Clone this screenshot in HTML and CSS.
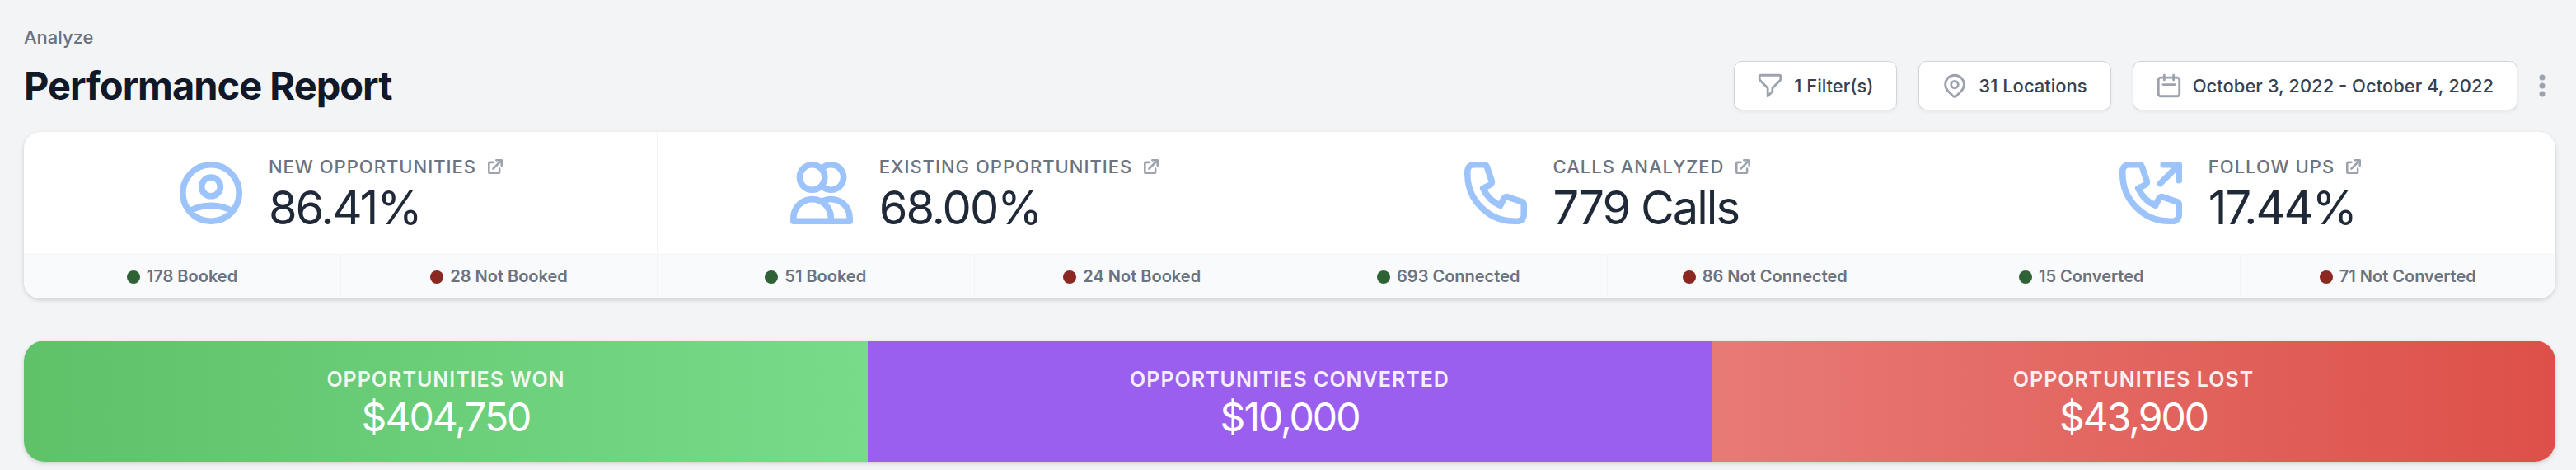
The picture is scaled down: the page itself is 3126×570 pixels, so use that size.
FILE: index.html
```html
<!DOCTYPE html>
<html lang="en">
<head>
  <meta charset="UTF-8" />
  <meta name="viewport" content="width=device-width, initial-scale=1" />
  <title>Performance Report</title>
  <link rel="stylesheet" href="styles.css">
</head>
<body>

<!-- shared icons -->
<svg class="icon-defs" aria-hidden="true">
  <symbol id="icon-external" viewBox="3 3 14 14">
    <path d="M11 3a1 1 0 100 2h2.586l-6.293 6.293a1 1 0 101.414 1.414L15 6.414V9a1 1 0 102 0V4a1 1 0 00-1-1h-5z" />
    <path d="M5 5a2 2 0 00-2 2v8a2 2 0 002 2h8a2 2 0 002-2v-3a1 1 0 10-2 0v3H5V7h3a1 1 0 000-2H5z" />
  </symbol>
</svg>

<div class="page">
  <header>
    <p class="breadcrumb">Analyze</p>
    <div class="title-row">
      <h1>Performance Report</h1>
      <div class="toolbar">
        <button type="button" class="filter-btn">
          <svg viewBox="0 0 24 24"><path d="M3 4a1 1 0 011-1h16a1 1 0 011 1v2.586a1 1 0 01-.293.707l-6.414 6.414a1 1 0 00-.293.707V17l-4 4v-6.586a1 1 0 00-.293-.707L3.293 7.293A1 1 0 013 6.586V4z" /></svg>
          1 Filter(s)
        </button>
        <button type="button" class="filter-btn">
          <svg viewBox="0 0 24 24"><path d="M17.657 16.657L13.414 20.9a1.998 1.998 0 01-2.827 0l-4.244-4.243a8 8 0 1111.314 0z" /><path d="M15 11a3 3 0 11-6 0 3 3 0 016 0z" /></svg>
          31 Locations
        </button>
        <button type="button" class="filter-btn">
          <svg viewBox="0 0 24 24"><path d="M8 7V3m8 4V3m-9 8h10M5 21h14a2 2 0 002-2V7a2 2 0 00-2-2H5a2 2 0 00-2 2v12a2 2 0 002 2z" /></svg>
          October 3, 2022 - October 4, 2022
        </button>
        <button type="button" class="more-btn" aria-label="More options">
          <svg viewBox="0 0 8 28"><circle cx="4" cy="4" r="3.5" /><circle cx="4" cy="14" r="3.5" /><circle cx="4" cy="24" r="3.5" /></svg>
        </button>
      </div>
    </div>
  </header>

  <section class="stats">
    <article class="stat">
      <div class="stat-main">
        <svg class="stat-icon" viewBox="2 2 20 20"><path d="M5.121 17.804A13.937 13.937 0 0112 16c2.5 0 4.847.655 6.879 1.804M15 10a3 3 0 11-6 0 3 3 0 016 0zm6 2a9 9 0 11-18 0 9 9 0 0118 0z" /></svg>
        <div class="stat-text">
          <h2>New Opportunities <a href="#" aria-label="Open new opportunities"><svg><use href="#icon-external" /></svg></a></h2>
          <p class="stat-value">86.41%</p>
        </div>
      </div>
      <div class="stat-footer">
        <span class="good">178 Booked</span>
        <span class="bad">28 Not Booked</span>
      </div>
    </article>

    <article class="stat">
      <div class="stat-main">
        <svg class="stat-icon" viewBox="2 2 20 20"><path d="M12 4.354a4 4 0 110 5.292M15 21H3v-1a6 6 0 0112 0v1zm0 0h6v-1a6 6 0 00-9-5.197M13 7a4 4 0 11-8 0 4 4 0 018 0z" /></svg>
        <div class="stat-text">
          <h2>Existing Opportunities <a href="#" aria-label="Open existing opportunities"><svg><use href="#icon-external" /></svg></a></h2>
          <p class="stat-value">68.00%</p>
        </div>
      </div>
      <div class="stat-footer">
        <span class="good">51 Booked</span>
        <span class="bad">24 Not Booked</span>
      </div>
    </article>

    <article class="stat">
      <div class="stat-main">
        <svg class="stat-icon" viewBox="2 2 20 20"><path d="M3 5a2 2 0 012-2h3.28a1 1 0 01.948.684l1.498 4.493a1 1 0 01-.502 1.21l-2.257 1.13a11.042 11.042 0 005.516 5.516l1.13-2.257a1 1 0 011.21-.502l4.493 1.498a1 1 0 01.684.949V19a2 2 0 01-2 2h-1C9.716 21 3 14.284 3 6V5z" /></svg>
        <div class="stat-text">
          <h2>Calls Analyzed <a href="#" aria-label="Open calls analyzed"><svg><use href="#icon-external" /></svg></a></h2>
          <p class="stat-value">779 Calls</p>
        </div>
      </div>
      <div class="stat-footer">
        <span class="good">693 Connected</span>
        <span class="bad">86 Not Connected</span>
      </div>
    </article>

    <article class="stat">
      <div class="stat-main">
        <svg class="stat-icon" viewBox="2 2 20 20"><path d="M16 3h5m0 0v5m0-5l-6 6M5 3a2 2 0 00-2 2v1c0 8.284 6.716 15 15 15h1a2 2 0 002-2v-3.28a1 1 0 00-.684-.948l-4.493-1.498a1 1 0 00-1.21.502l-1.13 2.257a11.042 11.042 0 01-5.516-5.517l2.257-1.128a1 1 0 00.502-1.21L9.228 3.683A1 1 0 008.279 3H5z" /></svg>
        <div class="stat-text">
          <h2>Follow Ups <a href="#" aria-label="Open follow ups"><svg><use href="#icon-external" /></svg></a></h2>
          <p class="stat-value">17.44%</p>
        </div>
      </div>
      <div class="stat-footer">
        <span class="good">15 Converted</span>
        <span class="bad">71 Not Converted</span>
      </div>
    </article>
  </section>

  <section class="totals">
    <div class="total won">
      <h2>Opportunities Won</h2>
      <p>$404,750</p>
    </div>
    <div class="total converted">
      <h2>Opportunities Converted</h2>
      <p>$10,000</p>
    </div>
    <div class="total lost">
      <h2>Opportunities Lost</h2>
      <p>$43,900</p>
    </div>
  </section>
</div>

</body>
</html>
```

FILE: styles.css
```css
* {
  box-sizing: border-box;
}

body {
  margin: 0;
  font-family: Inter, sans-serif;
  background: #f3f4f6;
  color: #1f2937;
}

h1, h2, p {
  margin: 0;
}

svg {
  fill: none;
  stroke: currentColor;
  stroke-width: 2;
  stroke-linecap: round;
  stroke-linejoin: round;
}

.icon-defs {
  display: none;
}

.page {
  padding: 28px 25px 10px 29px;
}

/* header */
.breadcrumb {
  font-size: 22px;
  line-height: 34px;
  font-weight: 500;
  color: #6b7280;
}

.title-row {
  display: flex;
  justify-content: space-between;
  align-items: center;
  margin: 12px 0 26px;
}

h1 {
  font-size: 47px;
  line-height: 60px;
  font-weight: 700;
  letter-spacing: -1px;
  color: #111827;
}

.toolbar {
  display: flex;
  align-items: center;
  gap: 26px;
}

.filter-btn {
  display: flex;
  align-items: center;
  gap: 12px;
  padding: 12px 28px 12px 26px;
  font: 500 22px/34px Inter, sans-serif;
  color: #374151;
  background: #fff;
  border: 1px solid #d1d5db;
  border-radius: 10px;
  box-shadow: 0 2px 4px rgb(0 0 0 / 0.05);
  cursor: pointer;
}

.filter-btn svg {
  width: 34px;
  height: 34px;
  color: #9ca3af;
}

.more-btn {
  display: flex;
  padding: 0 12px 0 0;
  border: 0;
  background: none;
  color: #9ca3af;
  cursor: pointer;
}

.more-btn svg {
  width: 8px;
  height: 28px;
  fill: currentColor;
  stroke: none;
}

/* stat cards */
.stats {
  display: grid;
  grid-template-columns: repeat(4, 1fr);
  overflow: hidden;
  background: #fff;
  border-radius: 20px;
  box-shadow: 0 2px 6px rgb(0 0 0 / 0.1), 0 2px 4px rgb(0 0 0 / 0.06);
}

.stat + .stat {
  border-left: 1px solid #f3f4f6;
}

.stat-main {
  display: flex;
  justify-content: center;
  align-items: center;
  gap: 32px;
  height: 148px;
  padding-left: 2px;
}

.stat-icon {
  width: 76px;
  height: 76px;
  color: #9dc4fa;
}

.stat-text {
  padding-top: 6px;
}

.stat h2 {
  display: flex;
  align-items: center;
  gap: 14px;
  font-size: 22px;
  line-height: 30px;
  font-weight: 500;
  letter-spacing: 1px;
  text-transform: uppercase;
  color: #6b7280;
}

.stat h2 a {
  display: flex;
  color: #9ca3af;
}

.stat h2 svg {
  width: 18px;
  height: 18px;
  fill: currentColor;
  stroke: none;
}

.stat-value {
  font-size: 56px;
  line-height: 70px;
  letter-spacing: -2px;
}

.stat-footer {
  display: grid;
  grid-template-columns: 1fr 1fr;
  background: #f9fafb;
  border-top: 1px solid #f3f4f6;
}

.stat-footer span {
  display: flex;
  justify-content: center;
  align-items: center;
  gap: 8px;
  font-size: 20px;
  line-height: 53px;
  font-weight: 600;
  color: #6b7280;
}

.stat-footer span + span {
  border-left: 1px solid #f3f4f6;
}

.stat-footer span::before {
  content: "";
  width: 16px;
  height: 16px;
  border-radius: 50%;
}

.good::before {
  background: #2f6336;
}

.bad::before {
  background: #8b2822;
}

/* totals banner */
.totals {
  display: grid;
  grid-template-columns: repeat(3, 1fr);
  margin-top: 51px;
  overflow: hidden;
  border-radius: 25px;
  box-shadow: 0 2px 6px rgb(0 0 0 / 0.1), 0 2px 4px rgb(0 0 0 / 0.06);
}

.total {
  padding: 31px 0 24px;
  text-align: center;
  color: #fff;
}

.total h2 {
  font-size: 25px;
  line-height: 32px;
  font-weight: 600;
  letter-spacing: 1px;
  text-transform: uppercase;
  opacity: 0.9;
}

.total p {
  font-size: 48px;
  line-height: 60px;
  letter-spacing: -2px;
}

.won {
  background: linear-gradient(to right, #5fc168, #78db8a);
}

.converted {
  background: #9b5ff0;
}

.lost {
  background: linear-gradient(to right, #e87a76, #dd5049);
}
```
